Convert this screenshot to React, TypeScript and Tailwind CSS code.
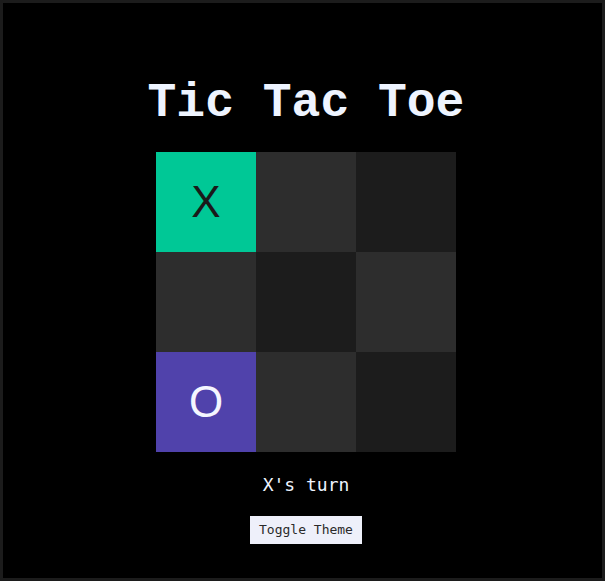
import React from "react";

const board: (string | null)[] = ["X", null, null, null, null, null, "O", null, null];

function cellClass(v: string | null, i: number) {
  const r = Math.floor(i / 3);
  const c = i % 3;
  if (v === "X") return "bg-[#00c896] text-[#1a1a1a]";
  if (v === "O") return "bg-[#5042ab] text-[#f4f6ff]";
  return (r + c) % 2 === 0 ? "bg-[#1c1c1c]" : "bg-[#2d2d2d]";
}

export default function App() {
  return (
    <div className="w-[612px] h-[588px] bg-white">
      <div className="w-[605px] h-[581px] bg-black border-[3px] border-[#1c1c1c] pl-[7px] flex flex-col items-center">
        <h1 className="mt-[76px] text-[48px] leading-[48px] font-bold text-[#eef4ff] font-['Liberation_Mono',monospace]">
          Tic Tac Toe
        </h1>
        <div className="mt-[25px] grid grid-cols-[repeat(3,100px)] grid-rows-[repeat(3,100px)]">
          {board.map((v, i) => (
            <div
              key={i}
              className={`${cellClass(v, i)} flex items-center justify-center text-[44px] font-['Liberation_Sans',Arial,sans-serif]`}
            >
              {v}
            </div>
          ))}
        </div>
        <div className="mt-[21px] text-[18px] leading-[24px] text-[#eef4ff] font-['DejaVu_Sans_Mono',monospace]">
          X's turn
        </div>
        <button className="mt-[19px] bg-[#eef0fa] text-[#2a2a2a] text-[13px] px-[9px] h-[28px] font-['DejaVu_Sans_Mono',monospace]">
          Toggle Theme
        </button>
      </div>
    </div>
  );
}
